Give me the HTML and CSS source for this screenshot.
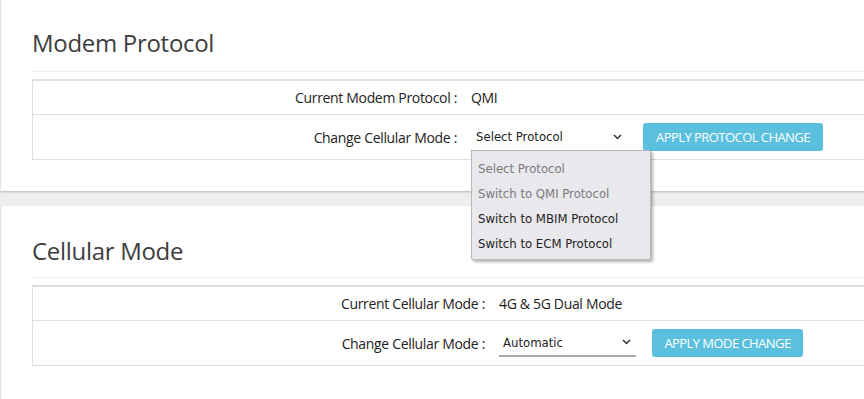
FILE: index.html
```html
<!DOCTYPE html>
<html>
<head>
<meta charset="utf-8">
<link rel="stylesheet" href="styles.css">
</head>
<body>
<div class="page">
  <section class="card card-first">
    <h2 class="card-title">Modem Protocol</h2>
    <div class="settings settings-protocol">
      <div class="row row-info">
        <div class="label">Current Modem Protocol :</div>
        <div class="value">QMI</div>
      </div>
      <div class="row row-form">
        <div class="label">Change Cellular Mode :</div>
        <div class="value controls">
          <div class="select select-protocol is-open">
            <span class="select-text">Select Protocol</span>
            <svg class="chevron" width="9" height="6" viewBox="0 0 9 6"><path d="M1 1 L4.5 4.5 L8 1" fill="none" stroke="#333" stroke-width="1.5"/></svg>
            <ul class="dropdown">
              <li class="opt disabled">Select Protocol</li>
              <li class="opt disabled">Switch to QMI Protocol</li>
              <li class="opt">Switch to MBIM Protocol</li>
              <li class="opt">Switch to ECM Protocol</li>
            </ul>
          </div>
          <button class="btn btn-protocol">APPLY PROTOCOL CHANGE</button>
        </div>
      </div>
    </div>
  </section>
  <section class="card card-second">
    <h2 class="card-title">Cellular Mode</h2>
    <div class="settings settings-mode">
      <div class="row row-info">
        <div class="label">Current Cellular Mode :</div>
        <div class="value">4G &amp; 5G Dual Mode</div>
      </div>
      <div class="row row-form">
        <div class="label">Change Cellular Mode :</div>
        <div class="value controls">
          <div class="select select-mode">
            <span class="select-text">Automatic</span>
            <svg class="chevron" width="9" height="6" viewBox="0 0 9 6"><path d="M1 1 L4.5 4.5 L8 1" fill="none" stroke="#333" stroke-width="1.5"/></svg>
          </div>
          <button class="btn btn-mode">APPLY MODE CHANGE</button>
        </div>
      </div>
    </div>
  </section>
</div>
</body>
</html>
```
FILE: styles.css
```css
html, body {
  margin: 0;
  padding: 0;
}
body {
  background: #eeeeee;
  font-family: "Open Sans", "Noto Sans", sans-serif;
  color: #222;
  overflow: hidden;
}
.page {
  width: 900px;
}
.card {
  background: #fff;
  border-left: 1px solid #e2e2e2;
  box-shadow: 0 1px 2px rgba(0, 0, 0, 0.25);
  padding-left: 31px;
}
.card-first {
  padding-top: 28px;
  padding-bottom: 31px;
}
.card-second {
  margin-top: 15px;
  padding-top: 30px;
  padding-bottom: 40px;
}
.card-title {
  margin: 0;
  font-weight: 400;
  font-size: 24px;
  letter-spacing: -0.3px;
  line-height: 30px;
  color: #3d3d3d;
  padding-bottom: 13px;
  border-bottom: 1px solid #ececec;
  margin-bottom: 7px;
}
.card-second .card-title {
  padding-bottom: 11px;
}
.settings {
  border: 1px solid #dddddd;
  border-top: 2px solid #dddddd;
}
.row {
  display: grid;
  align-items: center;
  font-size: 14px;
  letter-spacing: -0.33px;
}
.settings-protocol .row {
  grid-template-columns: 438px 1fr;
}
.settings-mode .row {
  grid-template-columns: 466px 1fr;
}
.row-info {
  height: 33px;
  border-bottom: 1px solid #dddddd;
}
.row-form {
  height: 44px;
}
.label {
  text-align: right;
  padding-right: 14px;
  color: #222;
}
.value {
  color: #222;
}
.controls {
  display: flex;
  align-items: center;
}
.select {
  position: relative;
  height: 27px;
  box-sizing: border-box;
  display: flex;
  align-items: center;
  justify-content: space-between;
  padding: 0 5px 1px 5px;
  font-family: "DejaVu Sans Condensed", "DejaVu Sans", sans-serif;
  font-stretch: condensed;
  font-size: 13px;
  letter-spacing: 0;
  color: #222;
}
.select-protocol {
  width: 156px;
  border-bottom: 1px solid #4a9fc0;
  margin-top: 1px;
}
.select-mode {
  width: 137px;
  border-bottom: 2px solid #aaaaaa;
  padding-left: 4px;
  margin-top: 1px;
}
.chevron {
  display: block;
}
.dropdown {
  position: absolute;
  left: 0;
  top: 26px;
  width: 180px;
  box-sizing: border-box;
  margin: 0;
  padding: 5px 0 3px 0;
  list-style: none;
  background: #e9e8ed;
  border: 1px solid #b9b9bf;
  border-radius: 2px;
  box-shadow: 2px 2px 3px rgba(0, 0, 0, 0.3);
  z-index: 5;
}
.opt {
  height: 25px;
  line-height: 25px;
  padding-left: 6px;
  color: #222;
  font-size: 13px;
}
.opt.disabled {
  color: #7a7a7a;
}
.btn {
  border: none;
  border-radius: 3px;
  background: #5bc0de;
  color: #fff;
  font-family: "Open Sans", sans-serif;
  font-size: 13px;
  letter-spacing: -0.55px;
  white-space: nowrap;
  height: 28px;
  padding: 0;
  cursor: pointer;
}
.btn-protocol {
  margin-left: 16px;
  width: 180px;
}
.btn-mode {
  margin-left: 16px;
  width: 151px;
}
```
